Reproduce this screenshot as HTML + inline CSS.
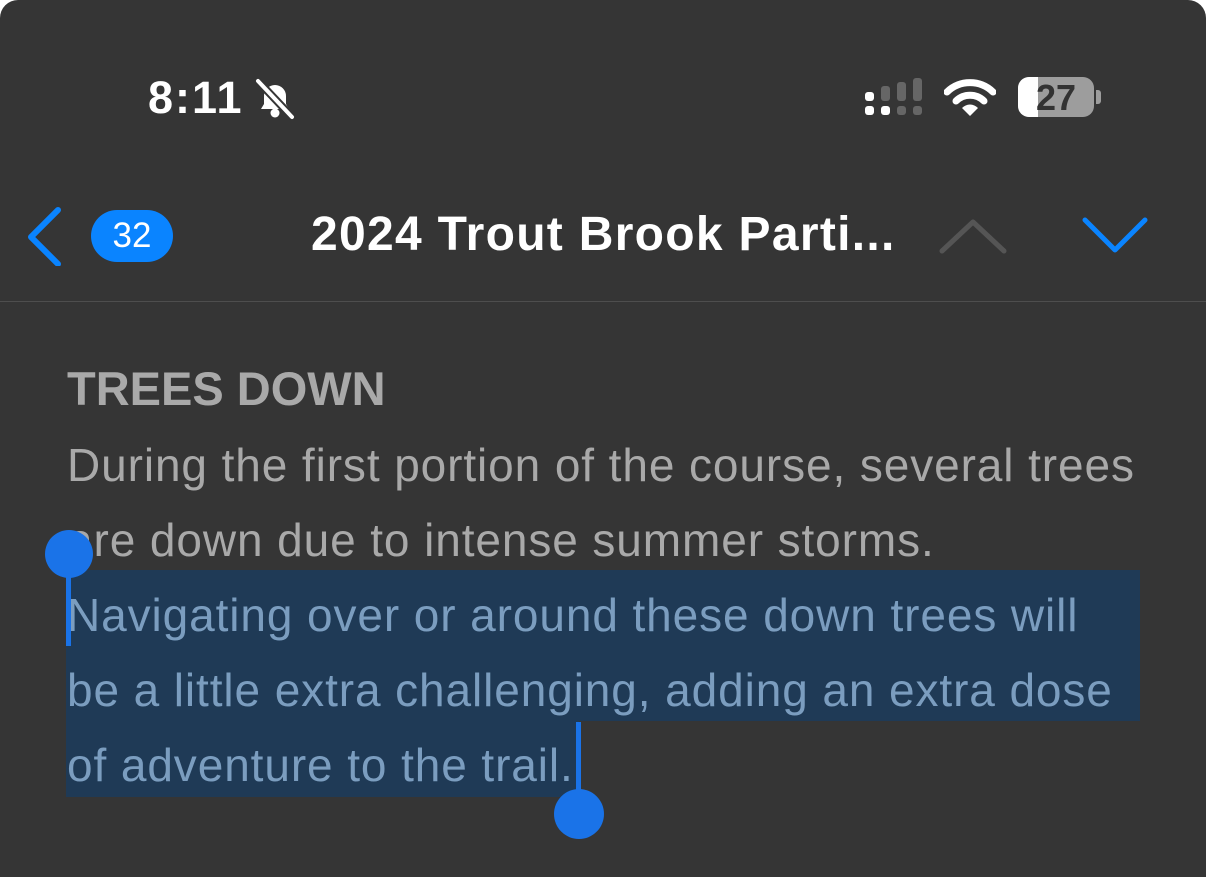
<!DOCTYPE html>
<html><head><meta charset="utf-8"><style>
html,body{margin:0;padding:0;width:1206px;height:877px;overflow:hidden;background:#fff;}
.scr{position:absolute;left:0;top:0;width:1206px;height:877px;background:#353535;border-radius:18px 18px 0 0;font-family:"Liberation Sans",sans-serif;}
.abs{position:absolute;white-space:nowrap;}
.line{position:absolute;left:67px;font-size:46px;letter-spacing:0.9px;color:#a9a9a9;white-space:nowrap;line-height:75px;}
</style></head><body><div class="scr">
<div class="abs" style="left:148px;top:72px;font-size:45px;font-weight:bold;color:#fff;line-height:52px;letter-spacing:2px;">8:11</div>
<svg class="abs" style="left:252px;top:76px" width="46" height="46" viewBox="0 0 46 46">
<path d="M9 33 L12 28 V20 A11 11 0 0 1 34 20 V28 L37 33 Z" fill="#fff"/>
<circle cx="23" cy="37" r="4.5" fill="#fff"/>
<line x1="6" y1="5" x2="40" y2="41" stroke="#353535" stroke-width="8"/>
<line x1="6" y1="5" x2="40" y2="41" stroke="#fff" stroke-width="4" stroke-linecap="round"/>
</svg>
<svg class="abs" style="left:864px;top:78px" width="60" height="42">
<rect x="1" y="14" width="9" height="9" rx="3" fill="#fff"/>
<rect x="1" y="28" width="9" height="9" rx="3" fill="#fff"/>
<rect x="17" y="8" width="9" height="15" rx="3" fill="#666"/>
<rect x="17" y="28" width="9" height="9" rx="3" fill="#fff"/>
<rect x="33" y="4" width="9" height="19" rx="3" fill="#666"/>
<rect x="33" y="28" width="9" height="9" rx="3" fill="#666"/>
<rect x="49" y="0" width="9" height="23" rx="3" fill="#666"/>
<rect x="49" y="28" width="9" height="9" rx="3" fill="#666"/>
</svg>
<svg class="abs" style="left:944px;top:78px" width="52" height="40" viewBox="0 0 52 40">
<path d="M3 14 A33 33 0 0 1 49 14" stroke="#fff" stroke-width="7" fill="none" stroke-linecap="round"/>
<path d="M12 23 A20 20 0 0 1 40 23" stroke="#fff" stroke-width="7" fill="none" stroke-linecap="round"/>
<path d="M18 30 L26 38 L34 30 A11 11 0 0 0 18 30Z" fill="#fff"/>
</svg>
<div class="abs" style="left:1018px;top:77px;width:76px;height:40px;border-radius:11px;background:#9d9d9d;overflow:hidden;">
<div style="position:absolute;left:0;top:0;width:20px;height:40px;background:#fff"></div>
<div style="position:absolute;left:0;width:76px;top:0;text-align:center;font-size:36px;font-weight:bold;color:#333;line-height:41px;">27</div></div>
<div class="abs" style="left:1096px;top:90px;width:5px;height:14px;border-radius:0 3px 3px 0;background:#9d9d9d"></div>
<svg class="abs" style="left:26px;top:206px" width="40" height="60"><path d="M32 4 L5 31 L32 58" stroke="#0a84ff" stroke-width="6" fill="none" stroke-linecap="round" stroke-linejoin="round"/></svg>
<div class="abs" style="left:91px;top:210px;width:82px;height:52px;border-radius:26px;background:#0a84ff;color:#fff;font-size:35px;text-align:center;line-height:52px;">32</div>
<div class="abs" style="left:311px;top:207px;font-size:48px;font-weight:bold;color:#fff;line-height:56px;letter-spacing:1.3px;">2024 Trout Brook Parti...</div>
<svg class="abs" style="left:938px;top:216px" width="70" height="40"><path d="M4 35 L35 6 L66 35" stroke="#555" stroke-width="5" fill="none" stroke-linecap="round" stroke-linejoin="round"/></svg>
<svg class="abs" style="left:1080px;top:212px" width="70" height="44"><path d="M5 8 L35 38 L65 8" stroke="#0a84ff" stroke-width="5" fill="none" stroke-linecap="round" stroke-linejoin="round"/></svg>
<div class="abs" style="left:0;top:301px;width:1206px;height:1px;background:#4e4e4e"></div>
<div class="abs" style="left:67px;top:362px;font-size:47px;font-weight:bold;color:#a9a9a9;line-height:54px;">TREES DOWN</div>
<div class="abs" style="left:66px;top:570px;width:1074px;height:151px;background:#1f3a56"></div>
<div class="abs" style="left:66px;top:720px;width:513px;height:77px;background:#1f3a56"></div>
<div class="line" style="top:428px">During the first portion of the course, several trees</div>
<div class="line" style="top:503px">are down due to intense summer storms.</div>
<div class="line" style="top:578px;color:#7b9dbf">Navigating over or around these down trees will</div>
<div class="line" style="top:653px;color:#7b9dbf">be a little extra challenging, adding an extra dose</div>
<div class="line" style="top:728px;color:#7b9dbf">of adventure to the trail.</div>
<div class="abs" style="left:66px;top:560px;width:5px;height:86px;background:#1a73e8"></div>
<div class="abs" style="left:45px;top:530px;width:48px;height:48px;border-radius:50%;background:#1a73e8"></div>
<div class="abs" style="left:576px;top:722px;width:5px;height:80px;background:#1a73e8"></div>
<div class="abs" style="left:554px;top:789px;width:50px;height:50px;border-radius:50%;background:#1a73e8"></div>
</div></body></html>
